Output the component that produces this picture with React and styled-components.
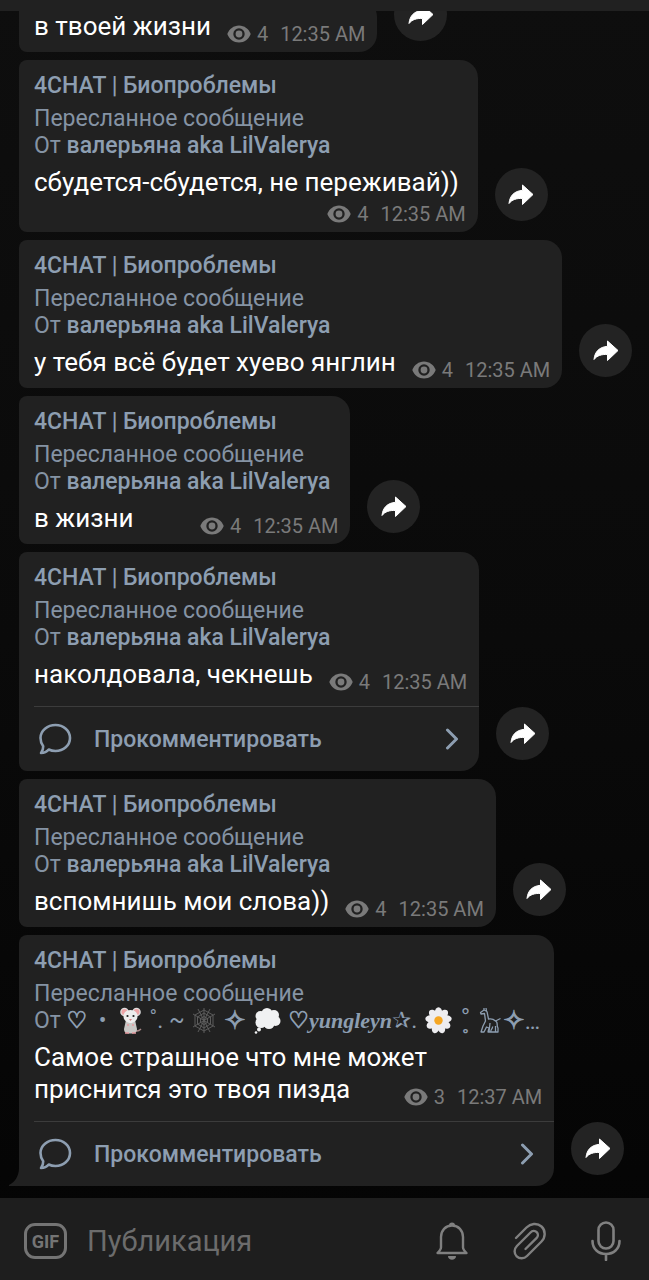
import React from 'react';
import styled, { createGlobalStyle } from 'styled-components';

const GlobalStyle = createGlobalStyle`
  * {
    box-sizing: border-box;
  }
  body {
    margin: 0;
    background: #0a0a0a;
    font-family: Roboto, "Noto Sans", "DejaVu Sans", sans-serif;
  }
  button, input {
    font-family: inherit;
    border: none;
    padding: 0;
    background: none;
  }
`;

const Page = styled.div`
  display: flex;
  flex-direction: column;
  height: 100vh;
  background: linear-gradient(#0e0e0e, #0a0a0a 50%, #040404);
`;

const TopBar = styled.header`
  flex: none;
  height: 11px;
  background: #212121;
`;

const Chat = styled.main`
  flex: 1;
  min-height: 0;
  display: flex;
  flex-direction: column;
  justify-content: flex-end;
  gap: 8px;
  padding: 0 8px 12px 19px;
  overflow: hidden;
`;

const MessageRow = styled.article`
  flex: none;
  display: flex;
  align-items: flex-end;
  gap: 17px;
`;

const Bubble = styled.div`
  position: relative;
  padding: 11px 0 0 15px;
  background: #212121;
  border-radius: 8px 18px 18px ${props => (props.$tail ? '0' : '8px')};
`;

const Tail = styled.svg`
  position: absolute;
  left: -10px;
  bottom: 0;
  width: 10px;
  height: 18px;
`;

const Channel = styled.h2`
  margin: 0 14px 4px 0;
  font-size: 23px;
  line-height: 30px;
  font-weight: 500;
  color: #8d9eb1;
`;

const Forwarded = styled.p`
  margin: 0 14px 0 0;
  font-size: 23px;
  line-height: 27px;
  color: #8593a4;
`;

const Author = styled(Forwarded)`
  display: flex;
  align-items: center;
  height: 27px;
  margin-right: ${props => (props.$fancy ? '14px' : '20px')};
  margin-bottom: 7px;
  white-space: pre;

  strong {
    font-weight: 500;
    color: #8d9eb1;
  }
`;

const FancyName = styled.span`
  display: flex;
  align-items: center;
  color: #8d9eb1;
  font-family: Roboto, "DejaVu Sans", sans-serif;

  em {
    font-family: "Liberation Serif", serif;
    font-size: 22px;
    font-weight: 700;
  }
`;

const Symbol = styled.span`
  font-size: ${props => (props.$large ? '26px' : '23px')};
  -webkit-text-stroke: 1px #8d9eb1;
`;

const Emoji = styled.svg`
  flex: none;
  width: ${props => props.$width || 27}px;
  height: 27px;
  margin: 0 2px;
`;

const Body = styled.div`
  display: ${props => (props.$layout === 'inline' ? 'flex' : 'grid')};
  grid-template-columns: 1fr;
  justify-content: space-between;
  align-items: end;
  column-gap: 9px;
  padding: 0 12px 6px 0;
`;

const Text = styled.p`
  margin: 0;
  padding: 0 7px 4px 0;
  grid-area: 1 / 1;
  font-size: 26px;
  line-height: 32px;
  color: #fff;
  white-space: pre-line;
`;

const Meta = styled.div`
  display: flex;
  align-items: center;
  grid-area: ${props => (props.$layout === 'overlap' ? '1 / 1' : 'auto')};
  justify-self: end;
  gap: 6px;
  font-size: 20px;
  line-height: 24px;
  color: #7a7a7a;
  white-space: nowrap;

  time {
    margin-left: 6px;
  }
`;

const CommentButton = styled.button`
  display: flex;
  align-items: center;
  width: 100%;
  height: 65px;
  margin-top: 6px;
  padding: 0 20px 0 4px;
  border-top: 1px solid #3c3c3c;
  font-size: 23px;
  font-weight: 500;
  color: #8d9eb1;

  span {
    flex: 1;
    margin-left: 22px;
    text-align: left;
  }
`;

const ShareButton = styled.button`
  flex: none;
  display: grid;
  place-items: center;
  width: 53px;
  height: 53px;
  margin-bottom: 11px;
  border-radius: 50%;
  background: #232323;
`;

const Composer = styled.footer`
  flex: none;
  display: flex;
  align-items: center;
  height: 82px;
  padding: 4px 28px 0 24px;
  background: #1e1e1e;
`;

const Input = styled.input`
  flex: 1;
  min-width: 0;
  margin: 0 20px;
  font-size: 29px;
  line-height: 40px;
  color: #fff;
  outline: none;

  &::placeholder {
    color: #6c6c6c;
    opacity: 1;
  }
`;

const IconButton = styled.button`
  flex: none;
  display: grid;
  place-items: center;
  color: #808080;
`;

const Actions = styled.div`
  display: flex;
  gap: 43px;
`;

const GifBadge = styled.span`
  display: grid;
  place-items: center;
  width: 43px;
  height: 36px;
  border: 3px solid #747474;
  border-radius: 11px;
  font-size: 18px;
  font-weight: 700;
  color: #747474;
`;

const EyeIcon = () => (
  <svg width="24" height="18" viewBox="0 0 24 18" aria-hidden="true">
    <path fill="#7a7a7a" d="M12 0.5C6.6 0.500 2.200 4 0.300 9c1.900 5 6.300 8.500 11.700 8.500S21.800 14 23.700 9C21.800 4 17.400.500 12 .500z" />
    <circle cx="12" cy="9" r="5.700" fill="#212121" />
    <circle cx="12" cy="9" r="3.400" fill="#7a7a7a" />
  </svg>
);

const ShareIcon = () => (
  <svg width="26" height="22" viewBox="0 0 26 22" aria-hidden="true">
    <path fill="#fff" stroke="#fff" strokeLinejoin="round" d="M14.500 1 25 10.500 14.500 20.500V14.500C8.500 14.200 4 15.500 1 19.500 1.800 11.500 6.500 7 14.500 6.300z" />
  </svg>
);

const CommentIcon = () => (
  <svg width="34" height="32" viewBox="0 0 34 32" fill="none" stroke="#8d9eb1" strokeWidth="2.600" strokeLinejoin="round" aria-hidden="true">
    <path d="M17.500 2C25.500 2 32 7.600 32 15S25.500 28 17.500 28c-2.600 0-4.800-.500-6.800-1.500C8.800 28.800 6 30 3 30c1.700-2 2.300-4.300 2.200-6.700C3.500 21 2.500 18.200 2.500 15 2.500 7.600 9.500 2 17.500 2z" />
  </svg>
);

const ChevronIcon = () => (
  <svg width="14" height="22" viewBox="0 0 14 22" fill="none" stroke="#8d9eb1" strokeWidth="3" strokeLinecap="round" strokeLinejoin="round" aria-hidden="true">
    <path d="M2.500 2 11.500 11l-9 9" />
  </svg>
);

const BellIcon = () => (
  <svg width="34" height="38" viewBox="0 0 34 38" fill="none" stroke="currentColor" strokeWidth="2.400" strokeLinejoin="round" aria-hidden="true">
    <path d="M17 3.500C10.500 3.500 6 8.500 6 15v10.500c0 2-1.500 3.500-3.500 5.500h29c-2-2-3.500-3.500-3.500-5.500V15c0-6.500-4.500-11.500-11-11.500z" />
    <path d="M14 3.500a3 3 0 0 1 6 0z" fill="currentColor" stroke="none" />
    <path d="M13 34h8c0 5-8 5-8 0z" fill="currentColor" stroke="none" />
  </svg>
);

const ClipIcon = () => (
  <svg width="36" height="38" viewBox="0 0 36 38" fill="none" stroke="currentColor" strokeWidth="2.400" strokeLinecap="round" aria-hidden="true">
    <path d="M4 16 14.500 5.500C18.500 1.500 25 .500 29.500 4.500s4 11 0 15L15 34c-3 3-7.500 3-10.300.300s-2.800-7.300.200-10.300L18.500 10.500c1.800-1.800 4.500-2 6.200-.300s1.500 4.300-.200 6L13.500 27" />
  </svg>
);

const MicIcon = () => (
  <svg width="30" height="40" viewBox="0 0 30 40" fill="none" stroke="currentColor" strokeWidth="2.600" strokeLinecap="round" aria-hidden="true">
    <rect x="7.500" y="1.500" width="15" height="26" rx="7.500" />
    <path d="M1.500 20c0 8 6 13 13.500 13s13.500-5 13.500-13M15 33v6" />
  </svg>
);

const MouseEmoji = () => (
  <Emoji $width={22} viewBox="0 0 22 27" aria-hidden="true">
    <path d="M14 23c3 2 5 1 7-1" fill="none" stroke="#a88" strokeWidth="1.500" />
    <path d="M6 13h9l2 9c0 4-3 4.500-6.500 4.500S4 26 4 22z" fill="#c9c8c6" />
    <circle cx="4.500" cy="5" r="4.300" fill="#dedede" />
    <circle cx="16.500" cy="5" r="4.300" fill="#dedede" />
    <circle cx="4.500" cy="5" r="3" fill="#eda5a7" />
    <circle cx="16.500" cy="5" r="3" fill="#eda5a7" />
    <path d="M10.500 3c5 0 7 3 7 6.500 0 4-4 6.500-7 6.500s-7-2.500-7-6.500C3.500 6 5.500 3 10.500 3z" fill="#ededed" />
    <circle cx="7.500" cy="9" r="1.100" fill="#222" />
    <circle cx="13.500" cy="9" r="1.100" fill="#222" />
    <path d="M9 12h3l-1.500 2z" fill="#d98084" />
    <path d="M7 18h2M12 18h2M5 26h4M12 26h4" stroke="#e59aa0" strokeWidth="1.500" />
  </Emoji>
);

const WebEmoji = () => (
  <Emoji $width={24} viewBox="0 0 24 27" fill="none" stroke="#5c5c5c" aria-hidden="true">
    <path d="M12 1v25M1 7l22 13M23 7 1 20M6 2l12 23M18 2 6 25" />
    <path d="M12 3 21 8v11l-9 5-9-5V8zM12 6l6.500 4v7L12 21l-6.500-4v-7zM12 9.500l3.500 2v4l-3.500 2-3.500-2v-4z" />
  </Emoji>
);

const ThoughtEmoji = () => (
  <Emoji viewBox="0 0 27 27" fill="#f0f1f2" aria-hidden="true">
    <circle cx="6.500" cy="9" r="5" />
    <circle cx="13" cy="6.500" r="5.500" />
    <circle cx="20" cy="8" r="5" />
    <circle cx="21.500" cy="14" r="5" />
    <circle cx="15" cy="16.500" r="5.500" />
    <circle cx="7" cy="15.500" r="5.500" />
    <circle cx="13" cy="12" r="6" />
    <circle cx="5" cy="22.500" r="2" />
    <circle cx="2" cy="25.500" r="1.300" />
  </Emoji>
);

const DaisyEmoji = () => (
  <Emoji viewBox="0 0 27 27" aria-hidden="true">
    {[0, 40, 80, 120, 160, 200, 240, 280, 320].map(angle => (
      <ellipse key={angle} cx="13.500" cy="5.500" rx="3.700" ry="5.300" fill="#eeedf0" transform={`rotate(${angle} 13.5 13.5)`} />
    ))}
    <circle cx="13.500" cy="13.500" r="4.200" fill="#f5a623" />
  </Emoji>
);

const GiraffeGlyph = () => (
  <Emoji $width={22} viewBox="0 0 22 27" fill="none" stroke="#8d9eb1" strokeWidth="1.300" strokeLinejoin="round" aria-hidden="true">
    <path d="M5 1v2L1.500 5.500 2 7l3.500-.500L6.500 14 4 19l-2 6h3l2.500-5 2.500 1-1 4h4.500M8 4.500 9.500 12c3-.500 5.500.500 7 2l5-2.500M17 14c2.500 3 0 4 2 7v4h-7c-1-2.500 2-3 1.500-5.500M5 3l3 1.500M7 1l.500 3M11 16l-1 9M16.500 19v6" />
  </Emoji>
);

const messages = [
  { text: 'в твоей жизни', views: 4, time: '12:35 AM', cut: true },
  { text: 'сбудется-сбудется, не переживай))', views: 4, time: '12:35 AM', layout: 'below' },
  { text: 'у тебя всё будет хуево янглин', views: 4, time: '12:35 AM' },
  { text: 'в жизни', views: 4, time: '12:35 AM' },
  { text: 'наколдовала, чекнешь', views: 4, time: '12:35 AM', comments: true },
  { text: 'вспомнишь мои слова))', views: 4, time: '12:35 AM' },
  {
    text: 'Самое страшное что мне может\nприснится это твоя пизда',
    views: 3,
    time: '12:37 AM',
    layout: 'overlap',
    comments: true,
    fancy: true,
    tail: true,
  },
];

const FancyAuthor = () => (
  <FancyName>
    <Symbol>♡</Symbol>
    <span>  •  </span>
    <MouseEmoji />
    <span> ˚. ~ </span>
    <WebEmoji />
    <span> <Symbol $large>✧</Symbol> </span>
    <ThoughtEmoji />
    <span> <Symbol>♡</Symbol><em>yungleyn</em>✰. </span>
    <DaisyEmoji />
    <span> ˚̥ </span>
    <GiraffeGlyph />
    <span><Symbol $large>✧</Symbol>…</span>
  </FancyName>
);

const Message = ({ text, views, time, layout = 'inline', comments, fancy, tail, cut }) => (
  <MessageRow>
    <Bubble $tail={tail}>
      {!cut && (
        <>
          <Channel>4CHAT | Биопроблемы</Channel>
          <Forwarded>Пересланное сообщение</Forwarded>
          <Author $fancy={fancy}>
            От {fancy ? <FancyAuthor /> : <strong>валерьяна aka LilValerya</strong>}
          </Author>
        </>
      )}
      <Body $layout={layout}>
        <Text>{text}</Text>
        <Meta $layout={layout}>
          <EyeIcon />
          <span>{views}</span>
          <time>{time}</time>
        </Meta>
      </Body>
      {comments && (
        <CommentButton type="button">
          <CommentIcon />
          <span>Прокомментировать</span>
          <ChevronIcon />
        </CommentButton>
      )}
      {tail && (
        <Tail viewBox="0 0 10 18" aria-hidden="true">
          <path fill="#212121" d="M10 0C10 8 6 14 0 17v1h10z" />
        </Tail>
      )}
    </Bubble>
    <ShareButton type="button" aria-label="Переслать">
      <ShareIcon />
    </ShareButton>
  </MessageRow>
);

const App = () => {
  return (
    <>
      <GlobalStyle />
      <Page>
        <TopBar />
        <Chat>
          {messages.map(message => (
            <Message key={message.text} {...message} />
          ))}
        </Chat>
        <Composer>
          <IconButton type="button">
            <GifBadge>GIF</GifBadge>
          </IconButton>
          <Input type="text" placeholder="Публикация" aria-label="Публикация" />
          <Actions>
            <IconButton type="button" aria-label="Уведомления">
              <BellIcon />
            </IconButton>
            <IconButton type="button" aria-label="Прикрепить">
              <ClipIcon />
            </IconButton>
            <IconButton type="button" aria-label="Голосовое сообщение">
              <MicIcon />
            </IconButton>
          </Actions>
        </Composer>
      </Page>
    </>
  );
};

export default App;
